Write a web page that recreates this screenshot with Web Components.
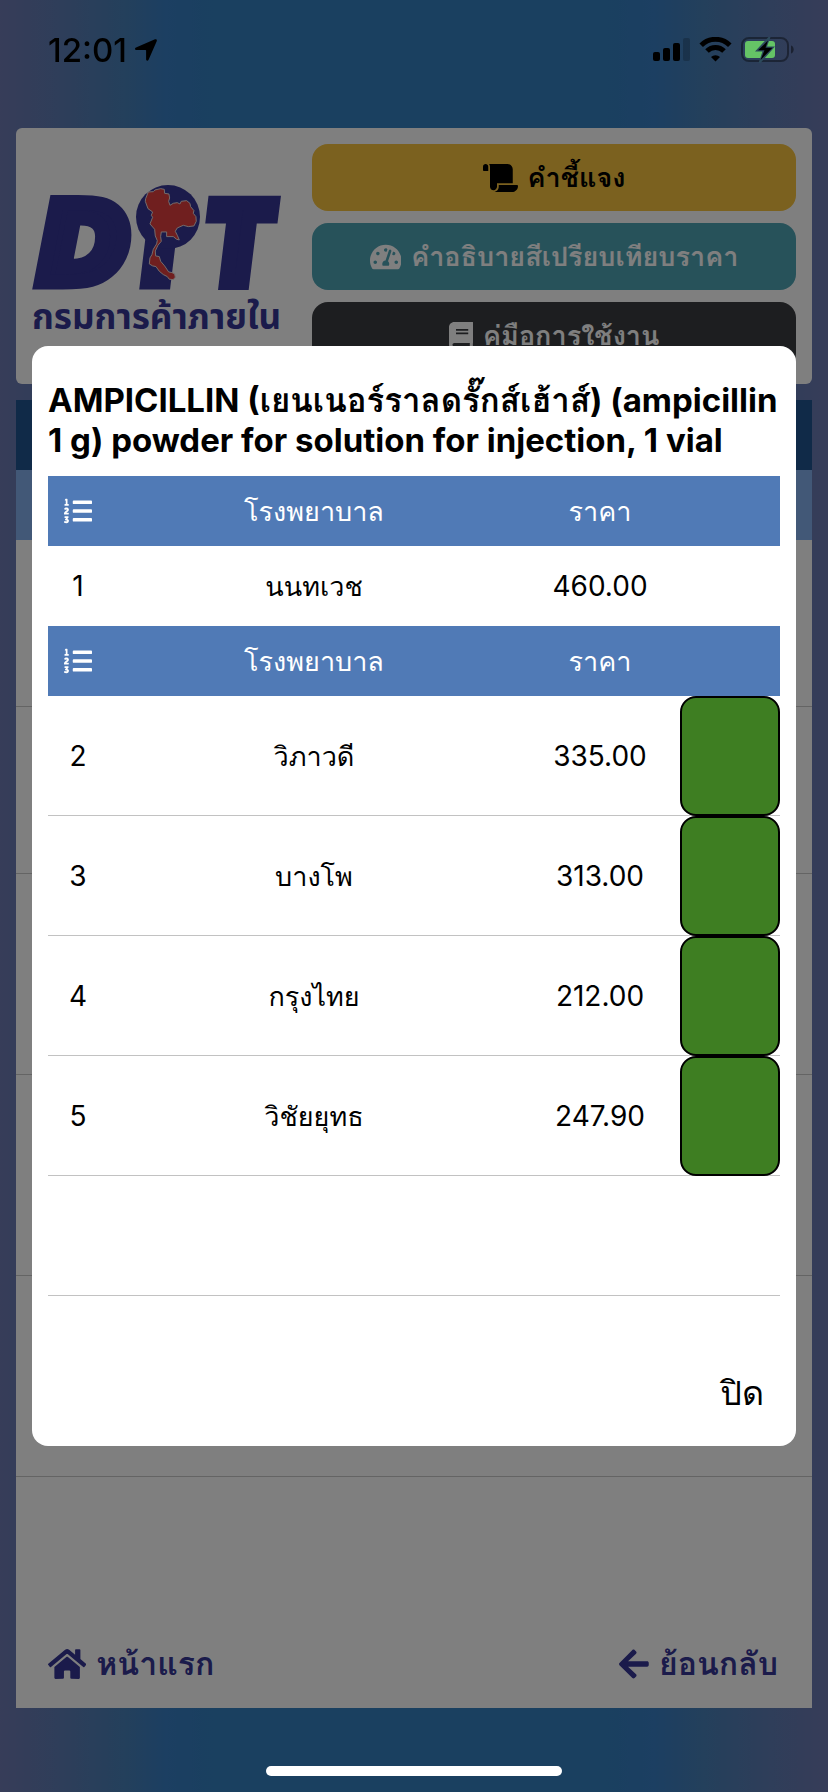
<!DOCTYPE html>
<html lang="th">
<head>
<meta charset="utf-8">
<meta name="viewport" content="width=device-width, initial-scale=1">
<title>กรมการค้าภายใน</title>
<style>
  * {
    box-sizing: border-box;
  }

  body {
    margin: 0;
    min-height: 100vh;
    display: flex;
    flex-direction: column;
    padding: 128px 16px 84px;
    font-family: Inter, Loma, "Noto Sans Thai Looped", "Noto Sans Thai", "Noto Sans", sans-serif;
    font-size: 28px;
    color: #000;
    background: linear-gradient(90deg, #6e7ab2 0%, #5e7cb4 7%, #4880b8 15%, #387ec4 20%, #3480c0 26%, #3480c0 73%, #387ec4 79%, #4880b8 85%, #5e7cb4 93%, #6e7ab2 100%);
  }
</style>
</head>
<body>
  <status-bar time="12:01"></status-bar>

  <site-header>
    <menu-button icon="scroll" theme="warning">คำชี้แจง</menu-button>
    <menu-button icon="gauge" theme="info">คำอธิบายสีเปรียบเทียบราคา</menu-button>
    <menu-button icon="book" theme="dark">คู่มือการใช้งาน</menu-button>
  </site-header>

  <result-list>
    <nav-link slot="footer" icon="home" href="#home">หน้าแรก</nav-link>
    <nav-link slot="footer" icon="arrow" href="#back">ย้อนกลับ</nav-link>
  </result-list>

  <price-dialog>
    <span slot="title">AMPICILLIN (เยนเนอร์ราลดรั๊กส์เฮ้าส์) (ampicillin 1 g) powder for solution for injection, 1 vial</span>
    <price-table rows='[["1","นนทเวช","460.00"]]'></price-table>
    <price-table compare rows='[["2","วิภาวดี","335.00"],["3","บางโพ","313.00"],["4","กรุงไทย","212.00"],["5","วิชัยยุทธ","247.90"],["","",""]]'></price-table>
  </price-dialog>

<script>
  const ICONS = {
    scroll: [640, 'M48 0C21.53 0 0 21.53 0 48v64c0 8.84 7.16 16 16 16h80V48C96 21.53 74.47 0 48 0zm208 412.57V352h288V96c0-52.94-43.06-96-96-96H111.59C121.74 13.41 128 29.92 128 48v368c0 38.87 34.65 69.65 74.75 63.12C234.22 474 256 444.46 256 412.57zM288 384v32c0 52.93-43.06 96-96 96h336c61.86 0 112-50.14 112-112 0-8.84-7.16-16-16-16H288z'],
    gauge: [576, 'M288 32C128.94 32 0 160.94 0 320c0 52.8 14.25 102.26 39.06 144.8 5.61 9.62 16.3 15.2 27.44 15.2h443c11.14 0 21.83-5.58 27.44-15.2C561.75 422.26 576 372.8 576 320c0-159.06-128.94-288-288-288zm0 64c14.71 0 26.58 10.13 30.32 23.65-1.11 2.26-2.64 4.23-3.45 6.67l-9.22 27.67c-5.13 3.49-10.97 6.01-17.64 6.01-17.67 0-32-14.33-32-32S270.33 96 288 96zM96 384c-17.67 0-32-14.33-32-32s14.33-32 32-32 32 14.33 32 32-14.33 32-32 32zm48-160c-17.67 0-32-14.33-32-32s14.33-32 32-32 32 14.33 32 32-14.33 32-32 32zm246.77-72.41l-61.33 184C343.13 347.33 352 364.54 352 384c0 11.72-3.38 22.55-8.88 32H232.88c-5.5-9.45-8.88-20.28-8.88-32 0-33.94 26.5-61.43 59.9-63.59l61.34-184.01c4.17-12.56 17.73-19.45 30.36-15.17 12.57 4.19 19.35 17.79 15.17 30.36zm14.66 57.2l15.52-46.55c3.47-1.29 7.13-2.23 11.05-2.23 17.67 0 32 14.33 32 32s-14.33 32-32 32c-11.38-.01-20.89-6.28-26.57-15.22zM480 384c-17.67 0-32-14.33-32-32s14.33-32 32-32 32 14.33 32 32-14.33 32-32 32z'],
    book: [448, 'M448 360V24c0-13.3-10.7-24-24-24H96C43 0 0 43 0 96v320c0 53 43 96 96 96h328c13.3 0 24-10.7 24-24v-16c0-7.5-3.5-14.3-8.9-18.7-4.2-15.4-4.2-59.3 0-74.7 5.4-4.3 8.9-11.1 8.9-18.6zM128 134c0-3.3 2.7-6 6-6h212c3.3 0 6 2.7 6 6v20c0 3.3-2.7 6-6 6H134c-3.3 0-6-2.7-6-6v-20zm0 64c0-3.3 2.7-6 6-6h212c3.3 0 6 2.7 6 6v20c0 3.3-2.7 6-6 6H134c-3.3 0-6-2.7-6-6v-20zm253.4 250H96c-17.7 0-32-14.3-32-32 0-17.6 14.4-32 32-32h285.4c-1.9 17.1-1.9 46.9 0 64z'],
    home: [576, 'M280.37 148.26L96 300.11V464a16 16 0 0 0 16 16l112.06-.29a16 16 0 0 0 15.92-16V368a16 16 0 0 1 16-16h64a16 16 0 0 1 16 16v95.64a16 16 0 0 0 16 16.05L464 480a16 16 0 0 0 16-16V300L295.67 148.26a12.19 12.19 0 0 0-15.3 0zM571.6 251.47L488 182.56V44.05a12 12 0 0 0-12-12h-56a12 12 0 0 0-12 12v72.61L318.47 43a48 48 0 0 0-61 0L4.34 251.47a12 12 0 0 0-1.6 16.9l25.5 31A12 12 0 0 0 45.15 301l235.22-193.74a12.19 12.19 0 0 1 15.3 0L530.9 301a12 12 0 0 0 16.9-1.6l25.5-31a12 12 0 0 0-1.7-16.93z'],
    arrow: [448, 'M257.5 445.1l-22.2 22.2c-9.4 9.4-24.6 9.4-33.9 0L7 273c-9.4-9.4-9.4-24.6 0-33.9L201.4 44.7c9.4-9.4 24.6-9.4 33.9 0l22.2 22.2c9.5 9.5 9.3 25-.4 34.3L136.6 216H424c13.3 0 24 10.7 24 24v32c0 13.3-10.7 24-24 24H136.6l120.5 114.8c9.8 9.3 10 24.8.4 34.3z'],
    list: [512, 'M61.77 401l17.5-20.15a19.92 19.92 0 0 0 5.07-14.19v-3.31C84.34 356 80.5 352 73 352H16a8 8 0 0 0-8 8v16a8 8 0 0 0 8 8h22.83a157.41 157.41 0 0 0-11 12.31l-5.61 7c-4 5.07-5.25 10.13-2.8 14.88l1.05 1.93c3 5.76 6.29 7.88 12.25 7.88h4.73c10.33 0 15.94 2.44 15.94 9.09 0 4.72-4.2 8.22-14.36 8.22a41.54 41.54 0 0 1-15.47-3.12c-6.49-3.88-11.74-3.5-15.6 3.12l-5.59 9.31c-3.72 6.13-3.19 11.72 2.63 15.94 7.71 4.69 20.38 9.44 37 9.44 34.16 0 48.5-22.75 48.5-44.12-.03-14.38-9.12-29.76-28.73-34.88zM496 224H176a16 16 0 0 0-16 16v32a16 16 0 0 0 16 16h320a16 16 0 0 0 16-16v-32a16 16 0 0 0-16-16zm0-160H176a16 16 0 0 0-16 16v32a16 16 0 0 0 16 16h320a16 16 0 0 0 16-16V80a16 16 0 0 0-16-16zm0 320H176a16 16 0 0 0-16 16v32a16 16 0 0 0 16 16h320a16 16 0 0 0 16-16v-32a16 16 0 0 0-16-16zM16 160h64a8 8 0 0 0 8-8v-16a8 8 0 0 0-8-8H64V40a8 8 0 0 0-8-8H32a8 8 0 0 0-7.14 4.42l-8 16A8 8 0 0 0 24 64h8v64H16a8 8 0 0 0-8 8v16a8 8 0 0 0 8 8zm-3.91 160H80a8 8 0 0 0 8-8v-16a8 8 0 0 0-8-8H41.32c3.29-10.29 48.34-18.68 48.34-56.44 0-29.06-25-39.56-44.47-39.56-21.36 0-33.8 10-40.46 18.75-4.37 5.59-3 10.84 2.8 15.37l8.58 6.88c5.61 4.56 11 2.47 16.12-2.44a13.44 13.44 0 0 1 9.46-3.84c3.33 0 9.28 1.56 9.28 8.75C51 248.19 0 257.31 0 304.59v4C0 316 5.08 320 12.09 320z']
  };

  const icon = name => `
    <svg class="icon" viewBox="0 0 ${ICONS[name][0]} 512" aria-hidden="true">
      <path fill="currentColor" d="${ICONS[name][1]}"/>
    </svg>`;

  class StatusBar extends HTMLElement {
    connectedCallback() {
      this.attachShadow({ mode: 'open' });
      this.shadowRoot.innerHTML = `
        <style>
          :host {
            position: fixed;
            inset: 0;
            z-index: 20;
            display: flex;
            flex-direction: column;
            justify-content: space-between;
            align-items: center;
            pointer-events: none;
          }

          .bar {
            width: 100%;
            height: 100px;
            padding: 0 34px 0 48px;
            box-sizing: border-box;
            display: flex;
            align-items: center;
            gap: 8px;
            font-size: 33px;
            font-weight: 500;
          }

          .signals {
            margin-left: auto;
          }

          .home {
            width: 296px;
            height: 10px;
            margin-bottom: 16px;
            border-radius: 5px;
            background: #fff;
          }
        </style>

        <div class="bar">
          <span>${this.getAttribute('time')}</span>
          <svg width="22" height="22" viewBox="0 0 22 22">
            <path d="M20 .3 1 8.500c-1.600.8-1.200 2.500.4 2.500H10.500c.4 0 .6.2.6.6v8.600c0 1.700 1.700 1.900 2.500.5L21.700 2.200C22.300.8 21.200-.2 20 .3z"/>
          </svg>
          <svg class="signals" width="141" height="26" viewBox="0 0 141 26">
            <rect x="0" y="15" width="7" height="9" rx="2"/>
            <rect x="10" y="11" width="7" height="13" rx="2"/>
            <rect x="20" y="6" width="7" height="18" rx="2"/>
            <rect x="30" y="1" width="7" height="23" rx="2" opacity=".2"/>
            <g fill="none" stroke="#000">
              <path d="M48.200 8.200a20.300 20.300 0 0 1 28.600 0" stroke-width="5"/>
              <path d="M54 14a12 12 0 0 1 17 0" stroke-width="5"/>
            </g>
            <path d="M62.500 24.500 58 20a6.500 6.500 0 0 1 9 0z"/>
            <rect x="89" y="1" width="46" height="23" rx="7" fill="none" stroke="#000" stroke-opacity=".4" stroke-width="2"/>
            <path d="M138 8.500c3.600 1 3.600 7 0 8z" opacity=".45"/>
            <rect x="92" y="4" width="30" height="17" rx="3" fill="#65c466"/>
            <path d="M115.500 0 102 14.500h7.500L105.500 26h2L122 9.500h-8L117.500 0z" fill="#2c4a5c"/>
            <path d="M115 3.500 105 13.300h6.500L107.500 23 119.500 10.800h-7z"/>
          </svg>
        </div>
        <div class="home"></div>
      `;
    }
  }

  class MenuButton extends HTMLElement {
    connectedCallback() {
      this.attachShadow({ mode: 'open' });
      this.shadowRoot.innerHTML = `
        <style>
          :host {
            display: block;
          }

          button {
            width: 100%;
            height: 67px;
            border: 0;
            border-radius: 16px;
            display: flex;
            align-items: center;
            justify-content: center;
            gap: 10px;
            font: inherit;
            font-size: 27px;
            font-weight: 700;
            color: #fff;
            background: #3a3c40;
          }

          .warning {
            color: #000;
            background: #f6c23e;
          }

          .info {
            background: #4fa4b5;
          }

          .icon {
            height: 28px;
          }
        </style>

        <button type="button" class="${this.getAttribute('theme')}">
          ${icon(this.getAttribute('icon'))}
          <span><slot></slot></span>
        </button>
      `;
    }
  }

  class SiteHeader extends HTMLElement {
    connectedCallback() {
      this.attachShadow({ mode: 'open' });
      this.shadowRoot.innerHTML = `
        <style>
          :host {
            display: grid;
            grid-template-columns: 248px 1fr;
            gap: 32px;
            align-items: center;
            padding: 16px 16px 15px;
            margin-bottom: 16px;
            border-radius: 6px;
            background: #fff;
          }

          .logo {
            width: 100%;
            overflow: visible;
            fill: #363696;
          }

          .letters {
            font: italic 900 108px Lato, sans-serif;
            stroke: #363696;
            stroke-width: 15px;
          }

          .wide {
            font-family: "DejaVu Sans", sans-serif;
            font-weight: 700;
          }

          .name {
            font-family: "Noto Sans Thai", "Noto Sans", sans-serif;
            font-size: 35px;
            font-weight: 700;
          }

          .buttons {
            display: flex;
            flex-direction: column;
            gap: 12px;
          }
        </style>

        <svg class="logo" viewBox="0 0 248 152" role="img" aria-label="DIT">
          <g class="letters">
            <text class="wide" x="7" y="101">D</text>
            <text x="112" y="101">I</text>
            <text x="176" y="101">T</text>
          </g>
          <circle cx="136" cy="36" r="32"/>
          <path transform="translate(88 -5) scale(.333)" d="M85 48 100 47 105 42 122 38 133 40 134 52 147 54 149 66 146 76 150 88 160 82 172 80 180 84 184 76 200 74 210 82 212 92 222 104 220 112 228 122 229 136 222 150 205 152 190 148 172 156 166 166 172 178 178 192 170 190 160 182 140 182 140 168 124 168 122 182 124 196 114 208 106 225 107 240 118 242 122 256 134 270 146 288 156 290 164 294 166 304 160 311 148 310 142 302 130 296 118 286 108 272 98 270 88 264 90 246 96 236 100 220 110 204 112 194 106 180 104 160 90 144 98 124 94 118 98 108 84 98 76 76 77 68z" fill="#e03e3e" stroke="#e8d8d8" stroke-width="3"/>
          <text class="name" x="0" y="148">กรมการค้าภายใน</text>
        </svg>
        <div class="buttons"><slot></slot></div>
      `;
    }
  }

  class NavLink extends HTMLElement {
    connectedCallback() {
      this.attachShadow({ mode: 'open' });
      this.shadowRoot.innerHTML = `
        <style>
          :host {
            display: block;
          }

          a {
            display: flex;
            align-items: center;
            gap: 10px;
            font-size: 32px;
            font-weight: 700;
            line-height: 40px;
            color: #363696;
            text-decoration: none;
          }

          .icon {
            height: 34px;
          }
        </style>

        <a href="${this.getAttribute('href')}">
          ${icon(this.getAttribute('icon'))}
          <span><slot></slot></span>
        </a>
      `;
    }
  }

  class ResultList extends HTMLElement {
    connectedCallback() {
      this.attachShadow({ mode: 'open' });
      this.shadowRoot.innerHTML = `
        <style>
          :host {
            flex: 1;
            display: flex;
            flex-direction: column;
            background: #fff;
          }

          .head {
            height: 70px;
            background: #205490;
          }

          .subhead {
            height: 70px;
            background: #84b0ee;
          }

          .row {
            height: 167px;
            box-sizing: border-box;
            border-bottom: 1px solid #c8c8c8;
          }

          .tall {
            height: 201px;
          }

          footer {
            margin-top: auto;
            padding: 24px 34px 24px 32px;
            display: flex;
            justify-content: space-between;
          }
        </style>

        <div class="head"></div>
        <div class="subhead"></div>
        <div class="row"></div>
        <div class="row"></div>
        <div class="row tall"></div>
        <div class="row tall"></div>
        <div class="row tall"></div>
        <footer><slot name="footer"></slot></footer>
      `;
    }
  }

  class PriceTable extends HTMLElement {
    connectedCallback() {
      const compare = this.hasAttribute('compare');
      const rows = JSON.parse(this.getAttribute('rows'));

      this.attachShadow({ mode: 'open' });
      this.shadowRoot.innerHTML = `
        <style>
          :host {
            display: block;
          }

          table {
            width: 100%;
            table-layout: fixed;
            border-collapse: collapse;
            text-align: center;
          }

          .no {
            width: 60px;
          }

          .price {
            width: 160px;
          }

          .level {
            width: 100px;
          }

          th {
            height: 70px;
            padding: 0;
            font-size: 27px;
            font-weight: 400;
            color: #fff;
            background: #507ab6;
          }

          td {
            height: 80px;
            padding: 0;
          }

          .name {
            font-size: 27px;
          }

          .compare td {
            height: 120px;
            box-shadow: inset 0 -1px #c2c2c2;
          }

          .swatch {
            height: 120px;
            box-sizing: border-box;
            border: 2px solid #000;
            border-radius: 16px;
            background: #3e7e22;
          }

          .icon {
            height: 28px;
            display: block;
            margin: 0 auto;
          }
        </style>

        <table class="${compare ? 'compare' : ''}">
          <thead>
            <tr>
              <th class="no" aria-label="ลำดับ">${icon('list')}</th>
              <th>โรงพยาบาล</th>
              <th class="price">ราคา</th>
              <th class="level"></th>
            </tr>
          </thead>
          <tbody>
            ${rows.map(([no, name, price]) => `
              <tr>
                <td>${no}</td>
                <td class="name">${name}</td>
                <td>${price}</td>
                <td>${compare && no ? '<div class="swatch"></div>' : ''}</td>
              </tr>
            `).join('')}
          </tbody>
        </table>
      `;
    }
  }

  class PriceDialog extends HTMLElement {
    connectedCallback() {
      this.attachShadow({ mode: 'open' });
      this.shadowRoot.innerHTML = `
        <style>
          :host {
            position: fixed;
            inset: 0;
            z-index: 10;
            display: flex;
            align-items: center;
            padding: 0 32px;
            background: rgba(0, 0, 0, 0.5);
          }

          .dialog {
            flex: 1;
            min-width: 0;
            padding: 34px 16px 16px;
            border-radius: 16px;
            background: #fff;
          }

          h2 {
            margin: 0 0 16px;
            font-size: 33px;
            font-weight: 700;
            line-height: 40px;
          }

          .actions {
            display: flex;
            justify-content: flex-end;
            padding-top: 60px;
          }

          button {
            height: 74px;
            padding: 0 16px;
            border: 0;
            background: none;
            font: inherit;
            font-size: 34px;
            color: #000;
          }
        </style>

        <div class="dialog" role="dialog" aria-modal="true" aria-labelledby="title">
          <h2 id="title"><slot name="title"></slot></h2>
          <slot></slot>
          <div class="actions">
            <button type="button">ปิด</button>
          </div>
        </div>
      `;

      this.shadowRoot.querySelector('button').addEventListener('click', () => this.remove());
    }
  }

  customElements.define('status-bar', StatusBar);
  customElements.define('menu-button', MenuButton);
  customElements.define('site-header', SiteHeader);
  customElements.define('nav-link', NavLink);
  customElements.define('result-list', ResultList);
  customElements.define('price-table', PriceTable);
  customElements.define('price-dialog', PriceDialog);
</script>
</body>
</html>
